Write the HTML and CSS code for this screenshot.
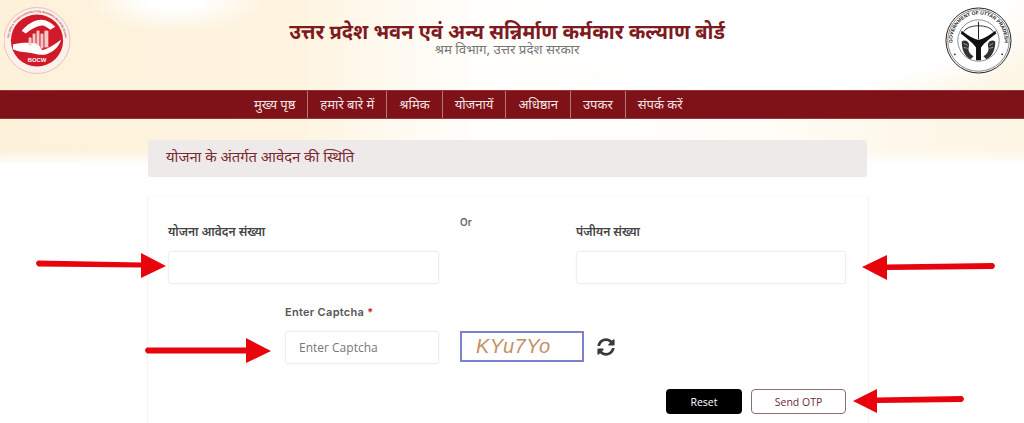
FILE: index.html
```html
<!DOCTYPE html>
<html lang="hi">

<head>
<meta charset="utf-8">
<title>उत्तर प्रदेश भवन एवं अन्य सन्निर्माण कर्मकार कल्याण बोर्ड</title>
<link rel="stylesheet" href="styles.css">
</head>

<body>

<div id="top">
	<div id="header">
		<svg class="logo" viewBox="0 0 68 68">
			<circle cx="33.500" cy="34" r="33.500" fill="#fbf1ea" stroke="#e7b3ae" stroke-width="0.8"/>
			<circle cx="33.500" cy="34" r="26.500" fill="#d01a2a"/>
			<path id="seal" d="M6 41.400 A28.500 28.500 0 1 1 61 41.400" fill="none"/>
			<text class="seal-text"><textPath href="#seal" startOffset="50%" text-anchor="middle">BUILDING &amp; OTHER CONSTRUCTION WORKERS WELFARE BOARD</textPath></text>
			<path d="M18 24 C23 18 31 13 38 13 C43 13 48 16 52 20 L47 23 C43 20 40 18 37 19 C31 20 26 24 22 27 Z" fill="#fff"/>
			<path d="M9 38 C16 36 26 36 33 37 C36 38 37 41 39 44 C45 42 52 38 58 33 C56 40 50 46 43 48 C36 50 28 46 22 46 C18 46 13 45 9 43 Z" fill="#fff"/>
			<g fill="#f4c9c9">
				<rect x="25" y="31" width="3" height="8"/>
				<rect x="29" y="27" width="3" height="10"/>
				<rect x="33" y="24" width="3" height="15"/>
				<rect x="37" y="27" width="3" height="15"/>
				<rect x="41" y="24" width="4" height="17"/>
			</g>
			<text x="33.500" y="56" class="logo-mark">BOCW</text>
		</svg>

		<div id="title">
			<h1>उत्तर प्रदेश भवन एवं अन्य सन्निर्माण कर्मकार कल्याण बोर्ड</h1>
			<p>श्रम विभाग, उत्तर प्रदेश सरकार</p>
		</div>

		<svg class="logo" viewBox="0 0 68 68">
			<circle cx="34" cy="34" r="33" fill="#fff" stroke="#222" stroke-width="1"/>
			<circle cx="34" cy="34" r="31.200" fill="none" stroke="#333" stroke-width="0.6"/>
			<circle cx="34" cy="34" r="21" fill="none" stroke="#444" stroke-width="0.6"/>
			<path id="ring" d="M9.100 43.100 A26.500 26.500 0 1 1 58.900 43.100" fill="none"/>
			<text class="emblem-text"><textPath href="#ring" startOffset="50%" text-anchor="middle">GOVERNMENT OF UTTAR PRADESH</textPath></text>
			<path d="M17 24 C23 29 29 32 34 33.500 C39 32 45 29 51 24 L52 27 C46 32 40 36 36.500 41 L36.500 54 H31.500 L31.500 41 C28 36 22 32 16 27 Z" fill="#111"/>
			<path d="M19 25 C23 17 45 17 49 25" fill="none" stroke="#222" stroke-width="0.9"/>
			<path d="M34 15 V33" stroke="#222" stroke-width="1"/>
			<path d="M17 35 C21 32 26 36 24 41 C23 45 26 48 29 50 L26 53 C20 50 17 44 17 35 Z" fill="#333"/>
			<path d="M51 35 C47 32 42 36 44 41 C45 45 42 48 39 50 L42 53 C48 50 51 44 51 35 Z" fill="#333"/>
			<path d="M19 37 L23 39 M19 41 L23 42 M49 37 L45 39 M49 41 L45 42" stroke="#ddd" stroke-width="0.6"/>
			<circle cx="10" cy="48" r="0.9" fill="#222"/>
			<circle cx="58" cy="48" r="0.9" fill="#222"/>
		</svg>
	</div>

	<ul id="navbar">
		<li>मुख्य पृष्ठ</li>
		<li>हमारे बारे में</li>
		<li>श्रमिक</li>
		<li>योजनायें</li>
		<li>अधिष्ठान</li>
		<li>उपकर</li>
		<li>संपर्क करें</li>
	</ul>

	<h2 id="heading">योजना के अंतर्गत आवेदन की स्थिति</h2>
</div>

<form id="card">
	<div class="row">
		<div class="field">
			<label>योजना आवेदन संख्या</label>
			<input type="text">
		</div>
		<div class="or">Or</div>
		<div class="field">
			<label>पंजीयन संख्या</label>
			<input type="text">
		</div>
	</div>

	<div class="captcha-row">
		<div class="field captcha-field">
			<label class="latin">Enter Captcha <span class="req">*</span></label>
			<input type="text" placeholder="Enter Captcha">
		</div>
		<div class="captcha-img">KYu7Yo</div>
		<svg class="refresh" viewBox="0 0 512 512">
			<path d="M370 133C339 104 298 88 255 88 177 89 110 142 92 216 90 222 85 226 80 226H24C16 226 10 219 11 211 33 93 136 8 256 8 322 8 381 35 425 78L460 43C475 28 500 39 500 60V192C500 205 489 216 476 216H344C323 216 312 190 327 175ZM36 296H168C189 296 200 322 185 337L144 379C173 408 214 424 257 424 335 423 402 370 420 296 422 290 427 286 432 286H488C496 286 502 293 501 301 479 419 376 504 256 504 190 504 131 477 87 434L52 469C37 484 12 473 12 452V320C12 307 23 296 36 296Z" fill="#3a3a3a"/>
		</svg>
	</div>

	<div id="buttons">
		<button type="button" class="reset">Reset</button>
		<button type="button" class="send">Send OTP</button>
	</div>
</form>

<svg id="arrows" viewBox="0 0 1024 423">
	<g fill="#e8040c">
		<path d="M38 260.500 L141 262.500 V253 L166 266 L141 278 V267.500 L38 266.500 Q34 263 38 260.500 Z"/>
		<path d="M147 347.500 L246 347.500 V338 L271 351 L246 363 V353.500 L147 353.500 Q143 350 147 347.500 Z"/>
		<path d="M993 263 L887 264.500 V255 L862 267 L887 280 V270 L993 269 Q997 266 993 263 Z"/>
		<path d="M962 396 L877 397.500 V389 L853 401 L877 413 V403 L962 402 Q966 399 962 396 Z"/>
	</g>
</svg>

</body>

</html>
```

FILE: styles.css
```css
html, body {
	margin: 0;
	padding: 0;
	height: 423px;
	overflow: hidden;
	background-color: #fff;
	font-family: "Noto Sans", "Noto Sans Devanagari", "Lohit Devanagari", sans-serif;
}

body {
	position: relative;
}

#top {
	height: 165px;
	background:
		linear-gradient(180deg, rgba(255,255,255,0) 150px, #fff 165px),
		radial-gradient(ellipse 90px 32px at 175px 0, #fff 30%, rgba(255,255,255,0) 100%),
		radial-gradient(ellipse 300px 115px at 780px 0, #fff 75%, rgba(255,255,255,0) 100%),
		linear-gradient(90deg, #fdf1da 0, #fef4e0 300px, #fffbf3 410px, #fffefb 480px, #fffdf8 760px, #fef8ea 900px, #fef6e5 1024px);
}

#header {
	height: 90px;
	display: flex;
	justify-content: space-between;
	align-items: flex-start;
	padding: 7px 12px 0 4px;
	box-sizing: border-box;
}

.logo {
	width: 67px;
	height: 67px;
	flex: none;
}

.logo-mark {
	font: bold 6px "Liberation Sans", sans-serif;
	fill: #fff;
	text-anchor: middle;
}

.seal-text {
	font: bold 2.600px "Liberation Sans", sans-serif;
	fill: #b8434b;
}

.emblem-text {
	font: bold 5px "Liberation Sans", sans-serif;
	fill: #222;
}

#title {
	text-align: center;
	padding-top: 14px;
	margin-right: 2px;
}

#title h1 {
	margin: 0;
	font-size: 20px;
	line-height: 21px;
	font-weight: 700;
	color: #7e1a22;
}

#title p {
	margin: 2px 0 0;
	font-size: 13.300px;
	line-height: 11px;
	color: #777;
}

#navbar {
	margin: 0;
	padding: 0 0 0 242px;
	height: 29px;
	list-style: none;
	display: flex;
	background-color: #7f1118;
	border-top: 1px solid #96363a;
	border-bottom: 1px solid #96363a;
	box-sizing: border-box;
}

#navbar li {
	padding: 0 12px;
	font-size: 13px;
	line-height: 27px;
	color: #f3e4e0;
	border-right: 1px solid #b07a7a;
}

#navbar li:last-child {
	border-right: 0;
}

#heading {
	width: 719px;
	height: 37px;
	margin: 21px 0 0 148px;
	padding-left: 18px;
	box-sizing: border-box;
	background-color: #eeeaea;
	border-radius: 3px;
	font-size: 14.800px;
	font-weight: 400;
	line-height: 33px;
	color: #7a2a30;
}

#card {
	width: 722px;
	height: 240px;
	margin: 30px 0 0 147px;
	padding: 20px 22px 0 20px;
	box-sizing: border-box;
	border-left: 1px solid #f5f5f5;
	border-right: 1px solid #f5f5f5;
	border-top: 1px solid #fafafa;
}

.row {
	display: flex;
}

.row .field {
	flex: none;
	padding-top: 7px;
}

.row .field:last-child {
	width: 270px;
}

.field {
	width: 271px;
}

.field label {
	display: block;
	height: 20px;
	margin-bottom: 8px;
	font-size: 12px;
	font-weight: 600;
	line-height: 18px;
	color: #444;
}

.field input {
	display: block;
	width: 100%;
	height: 33px;
	box-sizing: border-box;
	padding: 0 13px;
	background: #fff;
	border: 1px solid #eeeeee;
	border-radius: 3px;
	box-shadow: 0 0 3px rgba(0,0,0,0.04);
	font: 12px "Open Sans", sans-serif;
}

.field input::placeholder {
	color: #777;
}

.or {
	flex: none;
	width: 137px;
	padding: 0 0 0 21px;
	box-sizing: border-box;
	font: 600 10px Inter, sans-serif;
	color: #666;
}

.captcha-row {
	display: flex;
	align-items: flex-end;
	margin: 19px 0 0 117px;
}

.captcha-field {
	width: 154px;
}

.latin {
	font-family: Inter, sans-serif;
	font-size: 11px !important;
	letter-spacing: 0.3px;
	color: #555 !important;
}

.req {
	color: #c0282d;
}

.captcha-img {
	width: 124px;
	height: 31px;
	margin: 0 13px 2px 21px;
	box-sizing: border-box;
	border: 2px solid #7d7fd0;
	padding-left: 14px;
	font: italic 20px/27px "Liberation Sans", sans-serif;
	letter-spacing: 0.5px;
	color: #c49063;
}

.refresh {
	width: 18px;
	height: 18px;
	margin-bottom: 8px;
}

#buttons {
	display: flex;
	justify-content: flex-end;
	gap: 9px;
	margin: 25px 0 0;
}

#buttons button {
	height: 25px;
	padding: 0;
	border-radius: 4px;
	font: 10.500px "Open Sans", sans-serif;
}

.reset {
	width: 76px;
	background-color: #000;
	border: 0;
	color: #fff;
}

.send {
	width: 95px;
	background-color: #fff;
	border: 1px solid #8a7070;
	color: #6b2d33;
}

#arrows {
	position: absolute;
	left: 0;
	top: 0;
	width: 1024px;
	height: 423px;
	pointer-events: none;
}
```
